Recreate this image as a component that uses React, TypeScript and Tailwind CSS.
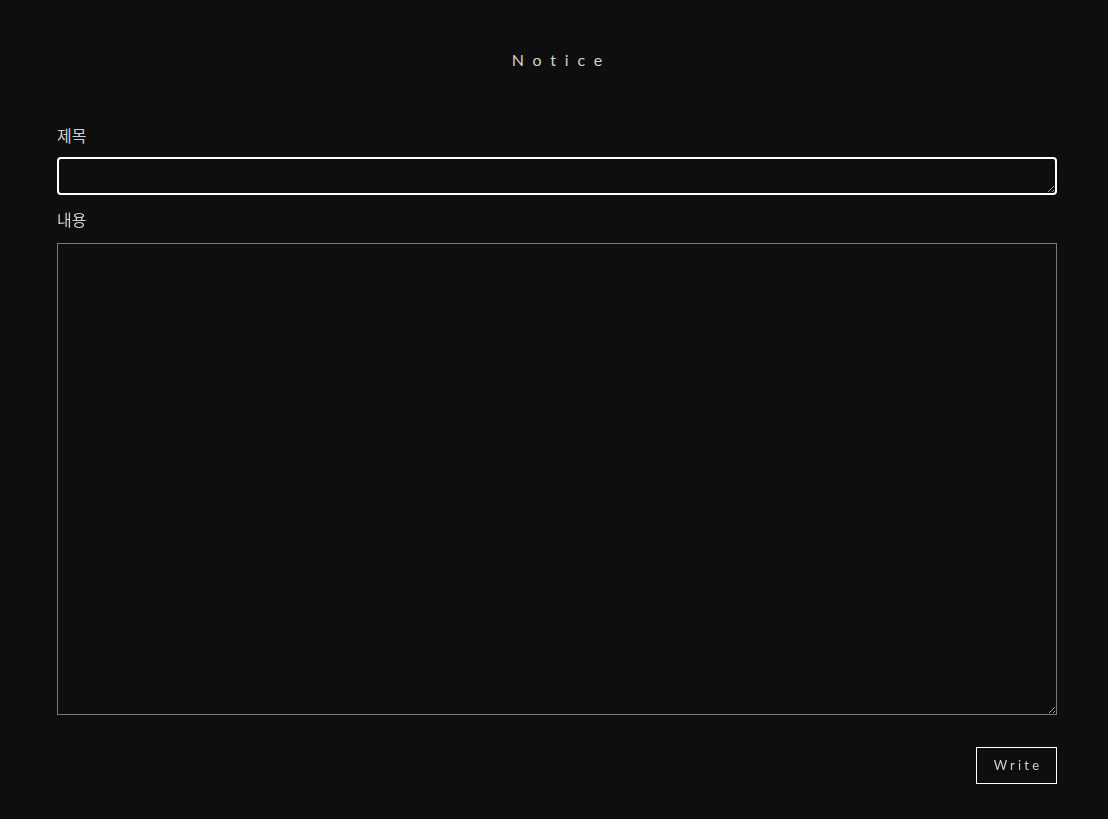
import React, { useState } from 'react'

export default function App() {
  const [title, setTitle] = useState('')
  const [content, setContent] = useState('')

  return (
    <div className="min-h-[819px] w-full bg-[#0e0e0e] font-['Lato','Noto_Sans_CJK_KR',sans-serif]">
      <div className="ml-[57px] w-[1000px] pt-[50px]">
        {/* Heading */}
        <h1 className="pl-[0.55em] text-center text-[16px] leading-[20px] tracking-[0.55em] text-[#cfcfcf]">Notice</h1>

        {/* Form */}
        <form className="mt-[55px] flex flex-col" onSubmit={(e) => e.preventDefault()}>
          <label className="font-['Noto_Sans_CJK_KR',sans-serif] text-[16px] leading-[20px] text-[#cfcfcf]" htmlFor="title">
            제목
          </label>
          <textarea
            id="title"
            autoFocus
            value={title}
            onChange={(e) => setTitle(e.target.value)}
            className="mt-[12px] h-[38px] w-full rounded-[4px] border-2 border-white bg-[#0e0e0e] px-[9px] py-[6px] text-[14px] text-[#cfcfcf] caret-[#cfcfcf] outline-none"
          />
          <label className="mt-[14px] font-['Noto_Sans_CJK_KR',sans-serif] text-[16px] leading-[20px] text-[#cfcfcf]" htmlFor="content">
            내용
          </label>
          <textarea
            id="content"
            value={content}
            onChange={(e) => setContent(e.target.value)}
            className="mt-[14px] h-[472px] w-full border border-[#777777] bg-[#0e0e0e] p-2 text-[14px] text-[#cfcfcf] outline-none"
          />
          <div className="mt-[32px] flex justify-end">
            <button
              type="submit"
              className="h-[37px] w-[81px] border border-white bg-transparent pl-[0.25em] text-[13px] tracking-[0.25em] text-[#cfcfcf]"
            >
              Write
            </button>
          </div>
        </form>
      </div>
    </div>
  )
}
